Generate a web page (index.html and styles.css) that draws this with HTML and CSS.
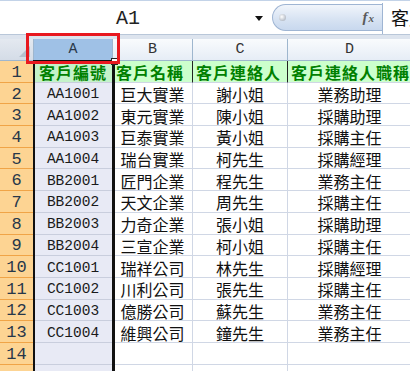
FILE: index.html
```html
<!DOCTYPE html>
<html lang="zh-Hant">
<head>
    <meta charset="UTF-8">
    <meta name="viewport" content="width=device-width, initial-scale=1.0">
    <title>客戶資料</title>
    <link rel="stylesheet" href="styles.css">
</head>
<body>
    <div class="workbook">
        <div class="formula-bar">
            <div class="name-box">
                <span class="cell-ref">A1</span>
                <span class="drop-arrow"></span>
            </div>
            <div class="fx-pill">
                <span class="pill-knob"></span>
                <span class="fx"><i>f</i><i class="fx-x">x</i></span>
            </div>
            <div class="formula-input">客戶編號</div>
        </div>
        <div class="strip"></div>

        <div class="sheet">
            <div class="corner"><span class="corner-tri"></span></div>
            <div class="col-head selected">A</div>
            <div class="col-head">B</div>
            <div class="col-head">C</div>
            <div class="col-head">D</div>

            <div class="row-head">1</div>
            <div class="cell title col-a">客戶編號</div>
            <div class="cell title">客戶名稱</div>
            <div class="cell title">客戶連絡人</div>
            <div class="cell title">客戶連絡人職稱</div>

            <div class="row-head">2</div>
            <div class="cell col-a">AA1001</div>
            <div class="cell">巨大實業</div>
            <div class="cell">謝小姐</div>
            <div class="cell">業務助理</div>

            <div class="row-head">3</div>
            <div class="cell col-a">AA1002</div>
            <div class="cell">東元實業</div>
            <div class="cell">陳小姐</div>
            <div class="cell">採購助理</div>

            <div class="row-head">4</div>
            <div class="cell col-a">AA1003</div>
            <div class="cell">巨泰實業</div>
            <div class="cell">黃小姐</div>
            <div class="cell">採購主任</div>

            <div class="row-head">5</div>
            <div class="cell col-a">AA1004</div>
            <div class="cell">瑞台實業</div>
            <div class="cell">柯先生</div>
            <div class="cell">採購經理</div>

            <div class="row-head">6</div>
            <div class="cell col-a">BB2001</div>
            <div class="cell">匠門企業</div>
            <div class="cell">程先生</div>
            <div class="cell">業務主任</div>

            <div class="row-head">7</div>
            <div class="cell col-a">BB2002</div>
            <div class="cell">天文企業</div>
            <div class="cell">周先生</div>
            <div class="cell">採購主任</div>

            <div class="row-head">8</div>
            <div class="cell col-a">BB2003</div>
            <div class="cell">力奇企業</div>
            <div class="cell">張小姐</div>
            <div class="cell">採購助理</div>

            <div class="row-head">9</div>
            <div class="cell col-a">BB2004</div>
            <div class="cell">三宣企業</div>
            <div class="cell">柯小姐</div>
            <div class="cell">採購主任</div>

            <div class="row-head">10</div>
            <div class="cell col-a">CC1001</div>
            <div class="cell">瑞祥公司</div>
            <div class="cell">林先生</div>
            <div class="cell">採購經理</div>

            <div class="row-head">11</div>
            <div class="cell col-a">CC1002</div>
            <div class="cell">川利公司</div>
            <div class="cell">張先生</div>
            <div class="cell">採購主任</div>

            <div class="row-head">12</div>
            <div class="cell col-a">CC1003</div>
            <div class="cell">億勝公司</div>
            <div class="cell">蘇先生</div>
            <div class="cell">業務主任</div>

            <div class="row-head">13</div>
            <div class="cell col-a">CC1004</div>
            <div class="cell">維興公司</div>
            <div class="cell">鐘先生</div>
            <div class="cell">業務主任</div>

            <div class="row-head">14</div>
            <div class="cell col-a"></div>
            <div class="cell"></div>
            <div class="cell"></div>
            <div class="cell"></div>

            <div class="row-head"></div>
            <div class="cell col-a"></div>
            <div class="cell"></div>
            <div class="cell"></div>
            <div class="cell"></div>

            <!-- selection frame around column A -->
            <div class="selection"><span class="handle"></span></div>
        </div>

        <!-- red marker around the A column heading -->
        <div class="marker"></div>
    </div>
</body>
</html>
```

FILE: styles.css
```css
body {
    margin: 0;
    padding: 0;
    background-color: #fff;
    overflow: hidden;
}

.workbook {
    position: relative;
    width: 410px;
    height: 371px;
    overflow: hidden;
    font-family: 'Liberation Mono', 'Noto Sans CJK TC', monospace;
}

/* name box + formula bar */
.formula-bar {
    display: flex;
    height: 31px;
    padding-top: 2px;
    border-top: 1px solid #c3d3e8;
    background-color: #fff;
    border-bottom: 1px solid #b9c7d9;
}

.name-box {
    width: 272px;
    display: flex;
    align-items: center;
}

.cell-ref {
    width: 248px;
    text-align: center;
    font-size: 20px;
    color: #222;
    padding-left: 4px;
}

.drop-arrow {
    width: 0;
    height: 0;
    margin-left: 3px;
    border-left: 4px solid transparent;
    border-right: 4px solid transparent;
    border-top: 5px solid #111;
}

.fx-pill {
    width: 110px;
    height: 27px;
    margin-top: 1px;
    box-sizing: border-box;
    border: 1px solid #9fb5d3;
    border-right: none;
    border-radius: 14px 0 0 14px;
    background: linear-gradient(#f1f5fb, #d6e2f2 60%, #c8d8ee);
    display: flex;
    align-items: center;
    justify-content: space-between;
    padding: 0 8px 0 6px;
}

.pill-knob {
    width: 7px;
    height: 7px;
    border-radius: 50%;
    background: radial-gradient(circle at 40% 40%, #fff, #b7bec8 70%);
}

.fx {
    font-family: 'Liberation Serif', serif;
    font-weight: bold;
    color: #5a5a5a;
    font-size: 15px;
}

.fx-x {
    font-size: 11px;
    margin-left: 1px;
}

.formula-input {
    flex: 1;
    border-left: 1px solid #9fb5d3;
    padding-left: 8px;
    font-family: 'Noto Sans CJK TC', sans-serif;
    font-size: 18px;
    line-height: 29px;
    color: #111;
    white-space: nowrap;
    overflow: hidden;
}

.strip {
    height: 4px;
    background-color: #dde4ee;
}

/* worksheet grid */
.sheet {
    position: relative;
    display: grid;
    grid-template-columns: 34px 79px 80px 95px 124px;
    grid-template-rows: 22px repeat(15, 21.7px);
    font-size: 15px;
}

.corner {
    position: relative;
    background: linear-gradient(#e4e9f0, #d4dce7);
    border-right: 1px solid #9eb6ce;
    border-bottom: 1px solid #9eb6ce;
}

.corner-tri {
    position: absolute;
    right: 3px;
    bottom: 3px;
    width: 0;
    height: 0;
    border-left: 11px solid transparent;
    border-bottom: 11px solid #b4c0ce;
}

.col-head {
    display: flex;
    align-items: center;
    justify-content: center;
    background: linear-gradient(#f9fbfd, #e6edf6);
    border-right: 1px solid #9eb6ce;
    border-bottom: 1px solid #9eb6ce;
    color: #333;
    font-size: 15px;
}

.col-head.selected {
    background: #9fc1e6;
    color: #2b3a4a;
}

.row-head {
    display: flex;
    align-items: center;
    justify-content: center;
    padding-top: 2px;
    background-color: #fdd493;
    border-right: 1px solid #f0a447;
    border-bottom: 1px solid #f0a447;
    color: #27374a;
    font-size: 17px;
}

.cell {
    display: flex;
    align-items: center;
    justify-content: center;
    padding-top: 2px;
    border-right: 1px solid #d0d7e5;
    border-bottom: 1px solid #d0d7e5;
    color: #111;
    font-size: 16px;
    white-space: nowrap;
}

.cell.col-a {
    background-color: #e8eaf5;
    border-color: #c9cedd;
    font-size: 14.5px;
    color: #1a1a1a;
}

.cell.title {
    background-color: #ccffcc;
    color: #008000;
    font-size: 16px;
    font-weight: bold;
    letter-spacing: 1px;
    border-right: 1px solid #222;
    justify-content: flex-start;
    padding-left: 3px;
}

.cell.title.col-a {
    background-color: #c4f2c9;
    justify-content: center;
    padding-left: 0;
}

.selection {
    position: absolute;
    left: 33px;
    top: 21px;
    width: 77px;
    height: 340px;
    border-left: 2px solid #111;
    border-top: 2px solid #111;
    border-right: 3px solid #111;
}

.handle {
    position: absolute;
    right: -6px;
    top: -4px;
    width: 5px;
    height: 5px;
    background-color: #fff;
    border: 1px solid #222;
}

.marker {
    position: absolute;
    left: 26px;
    top: 33px;
    width: 88px;
    height: 25px;
    border: 3px solid #e8181f;
}
```
